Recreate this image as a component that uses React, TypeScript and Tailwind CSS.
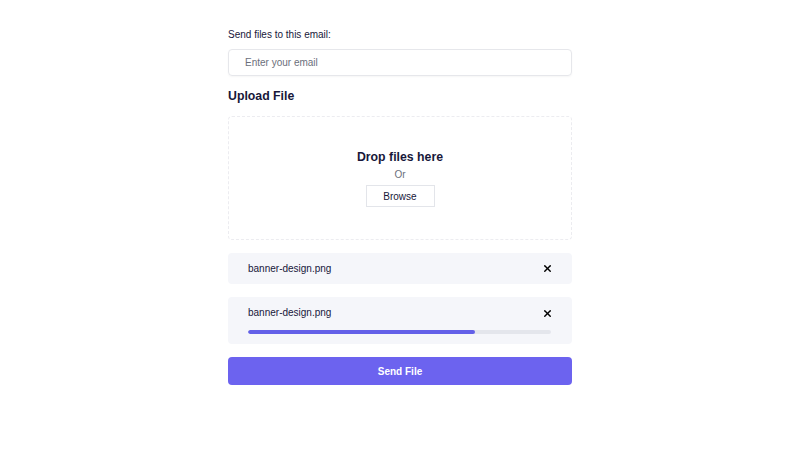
import { X } from "lucide-react";

const files = [
  { name: "banner-design.png", progress: null as number | null },
  { name: "banner-design.png", progress: 75 },
];

export default function App() {
  return (
    <div className="min-h-screen bg-white font-['Liberation_Sans',Arial,sans-serif] text-[#17173a]">
      <div className="w-[344px] mx-auto pt-[29px]">
        <p className="text-[10px] leading-[12px]">Send files to this email:</p>
        <input
          type="email"
          placeholder="Enter your email"
          className="mt-[8px] block w-full h-[27px] px-[16px] rounded-[4px] border border-[#e6e7eb] shadow-[0_1px_2px_rgba(0,0,0,0.04)] text-[10px] placeholder:text-[#6b6f7b] outline-none"
        />

        <h2 className="mt-[12px] text-[12.3px] leading-[16px] font-bold">Upload File</h2>

        <div className="mt-[12px] h-[124px] rounded-[4px] border border-dashed border-[#ececf0] flex flex-col items-center pt-[32px]">
          <p className="text-[12.3px] leading-[16px] font-bold">Drop files here</p>
          <p className="mt-[4px] text-[10px] leading-[12px] text-[#6b6f7b]">Or</p>
          <button className="mt-[4px] h-[22px] w-[69px] border border-[#e3e5ea] text-[10px] text-[#17173a] bg-white">
            Browse
          </button>
        </div>

        {files.map((f, i) => (
          <div
            key={i}
            className={
              f.progress === null
                ? "mt-[13px] h-[31px] rounded-[4px] bg-[#f5f6fa] pl-[20px] pr-[19px] flex items-center justify-between"
                : "mt-[13px] h-[47px] rounded-[4px] bg-[#f5f6fa] pl-[20px] pr-[19px] pt-[10px]"
            }
          >
            <div className="flex items-center justify-between h-[12px]">
              <span className="text-[10px] leading-[12px]">{f.name}</span>
              {f.progress !== null && <X size={11} strokeWidth={3} className="text-black" />}
            </div>
            {f.progress === null && <X size={11} strokeWidth={3} className="text-black" />}
            {f.progress !== null && (
              <div className="mt-[11px] mr-[2px] h-[4px] rounded-full bg-[#e4e6ec] overflow-hidden">
                <div className="h-full rounded-full bg-[#6360e8]" style={{ width: `${f.progress}%` }} />
              </div>
            )}
          </div>
        ))}

        <button className="mt-[13px] w-full h-[28px] rounded-[4px] bg-[#6c63ef] text-white text-[10px] font-bold">
          Send File
        </button>
      </div>
    </div>
  );
}
